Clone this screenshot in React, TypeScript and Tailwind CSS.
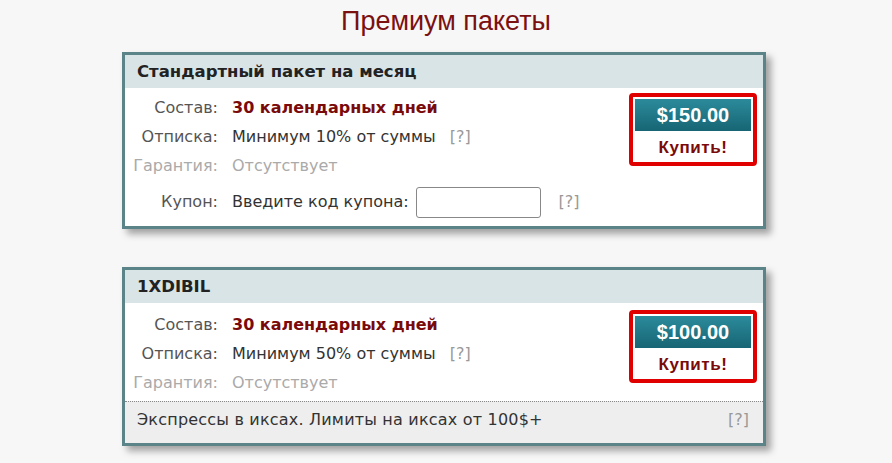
const packages = [
  {
    name: 'Стандартный пакет на месяц',
    days: '30 календарных дней',
    unsub: 'Минимум 10% от суммы',
    price: '$150.00',
    coupon: true,
    note: '',
  },
  {
    name: '1XDIBIL',
    days: '30 календарных дней',
    unsub: 'Минимум 50% от суммы',
    price: '$100.00',
    coupon: false,
    note: 'Экспрессы в иксах. Лимиты на иксах от 100$+',
  },
];

type Pack = (typeof packages)[number];

function Row({ label, dim, children }: { label: string; dim?: boolean; children: React.ReactNode }) {
  return (
    <div className="flex h-[29px] items-center">
      <div className={`w-[93px] text-right ${dim ? 'text-[#aaaaaa]' : 'text-[#555555]'}`}>{label}</div>
      <div className="flex items-center pl-[14px]">{children}</div>
    </div>
  );
}

function BuyBox({ price }: { price: string }) {
  return (
    <div className="mr-[6px] flex h-[73px] w-[128px] flex-col rounded-[4px] border-[4px] border-[#e10000] bg-white p-[2px]">
      <div className="flex h-[35px] items-center justify-center bg-gradient-to-b from-[#2b8b9b] to-[#176574] font-['Liberation_Sans',sans-serif] text-[20px] font-bold text-white">
        {price}
      </div>
      <div className="flex flex-1 items-center justify-center pt-[4px] font-['Liberation_Sans',sans-serif] text-[17px] font-bold tracking-[0.6px] text-[#7a0a0a]">
        Купить!
      </div>
    </div>
  );
}

function PackCard({ pack }: { pack: Pack }) {
  return (
    <div className="w-[644px] border-[3px] border-[#5b8489] bg-white shadow-[5px_5px_7px_rgba(0,0,0,0.35)]">
      <div className="flex h-[33px] items-center bg-[#d9e4e6] px-[12px] pt-[2px] text-[16.5px] font-bold text-[#222222]">
        {pack.name}
      </div>
      <div className={`flex items-start justify-between ${pack.coupon ? 'pt-[5px] pb-[2px]' : 'pt-[7px] pb-[4px]'}`}>
        <div className="text-[16px]">
          <Row label="Состав:">
            <span className="font-bold text-[#7a0a0a]">{pack.days}</span>
          </Row>
          <Row label="Отписка:">
            <span className="text-[#333333]">{pack.unsub}</span>
            <span className="ml-[14px] text-[#999999]">[?]</span>
          </Row>
          <Row label="Гарантия:" dim>
            <span className="text-[#aaaaaa]">Отсутствует</span>
          </Row>
          {pack.coupon && (
            <div className="flex h-[44px] items-center">
              <div className="w-[93px] text-right text-[#555555]">Купон:</div>
              <div className="flex items-center pl-[14px]">
                <span className="text-[#333333]">Введите код купона:</span>
                <input
                  className="ml-[7px] h-[31px] w-[125px] rounded-[3px] border border-[#888888] bg-white outline-none"
                  type="text"
                />
                <span className="ml-[18px] text-[#999999]">[?]</span>
              </div>
            </div>
          )}
        </div>
        <BuyBox price={pack.price} />
      </div>
      {pack.note && (
        <div className="flex justify-between border-t border-dotted border-[#888888] bg-[#eeeeee] px-[12px] pt-[8px] pb-[13px] text-[16px] leading-[20px]">
          <span className="tracking-[0.2px] text-[#333333]">{pack.note}</span>
          <span className="pr-[2px] text-[#999999]">[?]</span>
        </div>
      )}
    </div>
  );
}

export default function App() {
  return (
    <div className="min-h-[463px] bg-[#f7f7f7] font-['DejaVu_Sans','Liberation_Sans',sans-serif]">
      <div className="flex h-[52px] items-start justify-center pt-[1px] font-['Liberation_Sans_Narrow','Liberation_Sans',sans-serif] text-[27px] text-[#7b1010]">
        Премиум пакеты
      </div>
      <div className="flex flex-col items-center gap-[38px] pr-[4px]">
        {packages.map(pack => (
          <PackCard pack={pack} key={pack.name} />
        ))}
      </div>
    </div>
  );
}
